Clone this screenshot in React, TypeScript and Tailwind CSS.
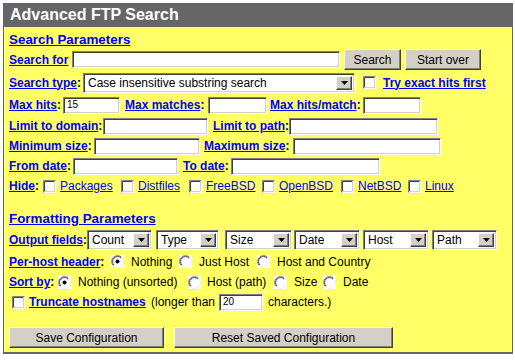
import React from "react";

const F = "font-['Liberation_Sans',Arial,sans-serif]";

const inset =
  "border border-t-[#808080] border-l-[#808080] border-b-white border-r-white shadow-[inset_1px_1px_0_#404040,inset_-1px_-1px_0_#d4d0c8] bg-white";
const raised =
  "border border-t-white border-l-white border-b-[#404040] border-r-[#404040] shadow-[inset_-1px_-1px_0_#808080] bg-[#d4d0c8]";

function Lbl({ text, w, colon = true }: { text: string; w: string; colon?: boolean }) {
  return (
    <span className={`${w} shrink-0 whitespace-nowrap text-[12px] font-bold`}>
      <span className="text-[#0000ff] underline">{text}</span>
      {colon ? <span className="text-black">:</span> : null}
    </span>
  );
}

function Input({ w, value, small }: { w: string; value?: string; small?: boolean }) {
  return (
    <div className={`${w} ${inset} h-[17px] shrink-0 flex items-center pl-[3px] overflow-hidden`}>
      {value ? <span className={small ? "text-[10px] leading-[12px]" : "text-[12px]"}>{value}</span> : null}
    </div>
  );
}

function Select({ w, text }: { w: string; text: string }) {
  return (
    <div className={`${w} ${inset} h-[20px] shrink-0 flex items-stretch p-[2px]`}>
      <span className="flex-1 pl-[2px] text-[12px] leading-[14px] flex items-center overflow-hidden whitespace-nowrap">{text}</span>
      <span className={`${raised} w-[16px] shrink-0 flex items-center justify-center`}>
        <svg width="7" height="4" viewBox="0 0 7 4">
          <path d="M0 0h7L3.5 4z" fill="#000" />
        </svg>
      </span>
    </div>
  );
}

function Btn({ w, text }: { w: string; text: string }) {
  return (
    <div className={`${w} ${raised} h-[21px] shrink-0 flex items-center justify-center text-[12px] text-black`}>
      {text}
    </div>
  );
}

function Cb() {
  return (
    <svg width="13" height="13" viewBox="0 0 13 13" className="shrink-0">
      <rect x="0" y="0" width="13" height="13" fill="#fff" />
      <path d="M0.5 12.5V0.5H12.5" stroke="#808080" fill="none" />
      <path d="M1.5 11.5V1.5H11.5" stroke="#404040" fill="none" />
      <path d="M1.5 11.5H11.5V1.5" stroke="#d4d0c8" fill="none" />
    </svg>
  );
}

function Radio({ on }: { on?: boolean }) {
  return (
    <svg width="13" height="13" viewBox="0 0 13 13" className="shrink-0">
      <rect x="0" y="0" width="13" height="13" fill="#fff" />
      <path d="M2.3 10.7A5.9 5.9 0 0 1 10.7 2.3" stroke="#808080" fill="none" />
      <path d="M3 10A4.9 4.9 0 0 1 10 3" stroke="#404040" fill="none" />
      <path d="M10.7 2.3A5.9 5.9 0 0 1 2.3 10.7" stroke="#e8e8e8" fill="none" />
      {on ? <circle cx="6.5" cy="6.5" r="2" fill="#000" /> : null}
    </svg>
  );
}

function Txt({ w, children, link }: { w?: string; children: React.ReactNode; link?: boolean }) {
  return (
    <span className={`${w ?? ""} shrink-0 whitespace-nowrap text-[12px]`}>
      <span className={link ? "text-[#0000ff] underline" : "text-black"}>{children}</span>
    </span>
  );
}

export default function App() {
  return (
    <div className={`${F} w-[515px] h-[360px] bg-white pt-[3px] pl-[3px]`}>
      <div className="w-[510px] flex flex-col">
        <div className="h-[24px] bg-[#666666] flex items-center pl-[7px] text-white font-bold text-[16px]">
          Advanced FTP Search
        </div>
        <div className="bg-[#ffff66] border border-t-0 border-[#666666] border-b-2 pl-[5px] pt-[5px] pb-[3px] flex flex-col">
          <div className="h-[16px] flex items-center">
            <span className="text-[13.4px] font-bold text-[#0000ff] underline">Search Parameters</span>
          </div>
          <div className="h-[23px] flex items-center">
            <Lbl text="Search for" w="w-[63px]" colon={false} />
            <Input w="w-[268px]" />
            <div className="ml-[4px]"><Btn w="w-[57px]" text="Search" /></div>
            <div className="ml-[4px]"><Btn w="w-[76px]" text="Start over" /></div>
          </div>
          <div className="h-[23px] flex items-center">
            <Lbl text="Search type" w="w-[74px]" />
            <Select w="w-[272px]" text="Case insensitive substring search" />
            <span className="ml-[8px] flex"><Cb /></span>
            <span className="ml-[7px] text-[12px] font-bold text-[#0000ff] underline whitespace-nowrap">Try exact hits first</span>
          </div>
          <div className="h-[22px] flex items-center">
            <Lbl text="Max hits" w="w-[54px]" />
            <Input w="w-[57px]" value="15" small />
            <span className="ml-[5px] flex"><Lbl text="Max matches" w="w-[83px]" /></span>
            <Input w="w-[59px]" />
            <span className="ml-[3px] flex"><Lbl text="Max hits/match" w="w-[93px]" /></span>
            <Input w="w-[58px]" />
          </div>
          <div className="h-[20px] flex items-center">
            <Lbl text="Limit to domain" w="w-[94px]" />
            <Input w="w-[105px]" />
            <span className="ml-[5px] flex"><Lbl text="Limit to path" w="w-[76px]" /></span>
            <Input w="w-[149px]" />
          </div>
          <div className="h-[20px] flex items-center">
            <Lbl text="Minimum size" w="w-[85px]" />
            <Input w="w-[106px]" />
            <span className="ml-[4px] flex"><Lbl text="Maximum size" w="w-[89px]" /></span>
            <Input w="w-[148px]" />
          </div>
          <div className="h-[20px] flex items-center">
            <Lbl text="From date" w="w-[64px]" />
            <Input w="w-[105px]" />
            <span className="ml-[5px] flex"><Lbl text="To date" w="w-[48px]" /></span>
            <Input w="w-[149px]" />
          </div>
          <div className="h-[20px] flex items-center">
            <Lbl text="Hide" w="w-[34px]" />
            <Cb />
            <span className="ml-[4px] flex"><Txt w="w-[61px]" link>Packages</Txt></span>
            <Cb />
            <span className="ml-[4px] flex"><Txt w="w-[51px]" link>Distfiles</Txt></span>
            <Cb />
            <span className="ml-[4px] flex"><Txt w="w-[56px]" link>FreeBSD</Txt></span>
            <Cb />
            <span className="ml-[4px] flex"><Txt w="w-[62px]" link>OpenBSD</Txt></span>
            <Cb />
            <span className="ml-[4px] flex"><Txt w="w-[50px]" link>NetBSD</Txt></span>
            <Cb />
            <span className="ml-[4px] flex"><Txt link>Linux</Txt></span>
          </div>
          <div className="h-[13px]" />
          <div className="h-[20px] flex items-center">
            <span className="text-[13.4px] font-bold text-[#0000ff] underline">Formatting Parameters</span>
          </div>
          <div className="h-[21px] flex items-center">
            <Lbl text="Output fields" w="w-[78px]" />
            <Select w="w-[65px]" text="Count" />
            <span className="ml-[4px] flex"><Select w="w-[63px]" text="Type" /></span>
            <span className="ml-[6px] flex"><Select w="w-[67px]" text="Size" /></span>
            <span className="ml-[2px] flex"><Select w="w-[66px]" text="Date" /></span>
            <span className="ml-[3px] flex"><Select w="w-[66px]" text="Host" /></span>
            <span className="ml-[3px] flex"><Select w="w-[65px]" text="Path" /></span>
          </div>
          <div className="h-[23px] flex items-center">
            <Lbl text="Per-host header" w="w-[102px]" />
            <Radio on />
            <span className="ml-[7px] flex"><Txt w="w-[48px]">Nothing</Txt></span>
            <Radio />
            <span className="ml-[7px] flex"><Txt w="w-[58px]">Just Host</Txt></span>
            <Radio />
            <span className="ml-[7px] flex"><Txt>Host and Country</Txt></span>
          </div>
          <div className="h-[18px] flex items-center">
            <Lbl text="Sort by" w="w-[49px]" />
            <Radio on />
            <span className="ml-[7px] flex"><Txt w="w-[110px]">Nothing (unsorted)</Txt></span>
            <Radio />
            <span className="ml-[6px] flex"><Txt w="w-[67px]">Host (path)</Txt></span>
            <Radio />
            <span className="ml-[7px] flex"><Txt w="w-[29px]">Size</Txt></span>
            <Radio />
            <span className="ml-[7px] flex"><Txt>Date</Txt></span>
          </div>
          <div className="h-[22px] flex items-center">
            <span className="ml-[3px] flex"><Cb /></span>
            <span className="ml-[4px] w-[122px] shrink-0 whitespace-nowrap text-[12px] font-bold text-[#0000ff]">
              <span className="underline">Truncate hostnames</span>
            </span>
            <Txt w="w-[68px]">(longer than</Txt>
            <Input w="w-[44px]" value="20" small />
            <span className="ml-[5px] flex"><Txt>characters.)</Txt></span>
          </div>
          <div className="h-[13px]" />
          <div className="h-[23px] flex items-center">
            <Btn w="w-[155px]" text="Save Configuration" />
            <span className="ml-[10px] flex"><Btn w="w-[219px]" text="Reset Saved Configuration" /></span>
          </div>
        </div>
      </div>
    </div>
  );
}
